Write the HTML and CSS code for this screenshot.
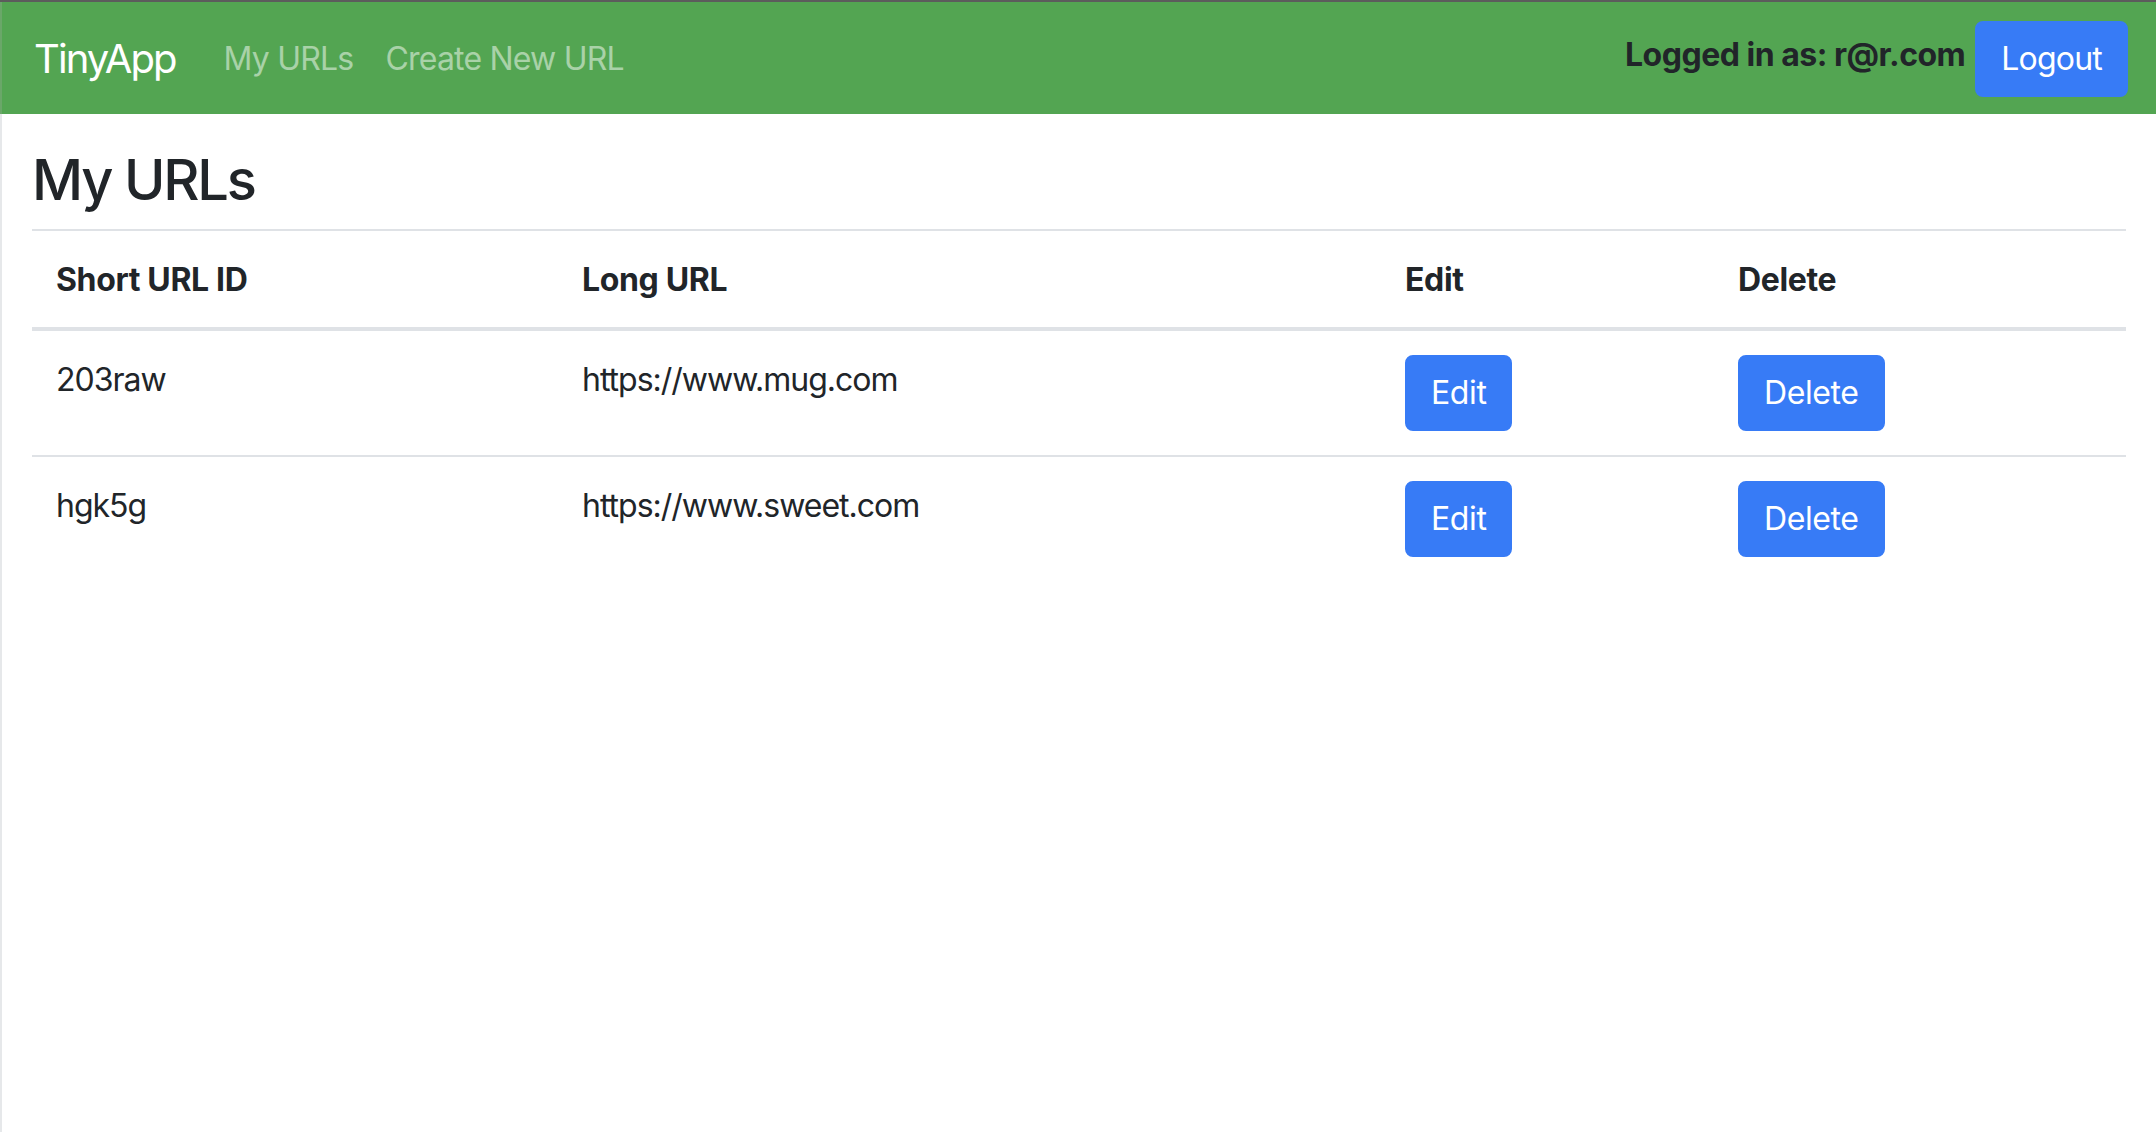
FILE: index.html
```html
<!DOCTYPE html>
<html lang="en">
<head>
<meta charset="utf-8">
<title>TinyApp</title>
<link rel="stylesheet" href="styles.css">
</head>
<body>
<div class="frame">
  <nav class="navbar">
    <div class="nav-left">
      <a class="brand" href="#">TinyApp</a>
      <a class="nav-link" href="#">My URLs</a>
      <a class="nav-link" href="#">Create New URL</a>
    </div>
    <div class="nav-right">
      <span class="user">Logged in as: r@r.com</span>
      <button class="btn">Logout</button>
    </div>
  </nav>
  <main class="content">
    <h1 class="title">My URLs</h1>
    <table class="urls">
      <colgroup>
        <col class="c-short">
        <col class="c-long">
        <col class="c-edit">
        <col class="c-del">
      </colgroup>
      <thead>
        <tr>
          <th>Short URL ID</th>
          <th>Long URL</th>
          <th>Edit</th>
          <th>Delete</th>
        </tr>
      </thead>
      <tbody>
        <tr>
          <td>203raw</td>
          <td>https://www.mug.com</td>
          <td><button class="btn">Edit</button></td>
          <td><button class="btn">Delete</button></td>
        </tr>
        <tr>
          <td>hgk5g</td>
          <td>https://www.sweet.com</td>
          <td><button class="btn">Edit</button></td>
          <td><button class="btn">Delete</button></td>
        </tr>
      </tbody>
    </table>
  </main>
</div>
</body>
</html>
```

FILE: styles.css
```css
* { box-sizing: border-box; }

html, body {
  margin: 0;
  padding: 0;
  background: #ffffff;
}

body {
  font-family: Inter, "Liberation Sans", Arial, sans-serif;
  font-size: 32px;
  line-height: 1.5;
  color: #212529;
  border-top: 2px solid #5c5c5c;
  min-height: 1132px;
}

.frame {
  border-left: 2px solid #e6e8ea;
  min-height: 1130px;
}

.navbar {
  display: flex;
  align-items: center;
  justify-content: space-between;
  background: #53a552;
  padding: 17px 28px 15px 32px;
  margin-left: -2px;
  border-left: 2px solid #6aa769;
}

.nav-left {
  display: flex;
  align-items: center;
}

.brand {
  font-size: 40px;
  line-height: 60px;
  padding: 10px 0;
  margin-right: 32px;
  color: #ffffff;
  text-decoration: none;
  letter-spacing: -1.9px;
}

.nav-link {
  padding: 16px;
  line-height: 48px;
  color: rgba(255, 255, 255, 0.5);
  text-decoration: none;
  letter-spacing: -0.8px;
}

.nav-right {
  display: flex;
  align-items: center;
}

.user {
  font-weight: 700;
  line-height: 48px;
  margin-right: 10px;
  margin-bottom: 8px;
  color: #212529;
  letter-spacing: -0.5px;
}

.btn {
  font-family: inherit;
  font-size: 32px;
  line-height: 48px;
  font-weight: 400;
  color: #ffffff;
  background: #377bf6;
  border: 2px solid #377bf6;
  border-radius: 8px;
  padding: 12px 24px;
  margin: 0;
  cursor: pointer;
  letter-spacing: -0.8px;
}

.content {
  padding: 33px 30px 0 30px;
}

.title {
  font-size: 56px;
  font-weight: 500;
  line-height: 1.2;
  margin: 0 0 15px 0;
  letter-spacing: -2.2px;
}

.urls {
  width: 100%;
  border-collapse: collapse;
  table-layout: fixed;
}

.c-short { width: 526px; }
.c-long { width: 823px; }
.c-edit { width: 333px; }
.c-del { width: auto; }

.urls th,
.urls td {
  padding: 25px 24px 23px 24px;
  text-align: left;
  vertical-align: top;
  border-top: 2px solid #dfe2e6;
  line-height: 48px;
}

.urls th {
  font-weight: 700;
  vertical-align: bottom;
  border-bottom: 4px solid #dfe2e6;
  letter-spacing: -0.35px;
}

.urls td {
  letter-spacing: -1px;
}

.urls td .btn {
  margin-top: -1px;
  margin-bottom: 1px;
  letter-spacing: -0.4px;
}

.urls tbody tr:first-child td {
  border-top: 0;
}
```
